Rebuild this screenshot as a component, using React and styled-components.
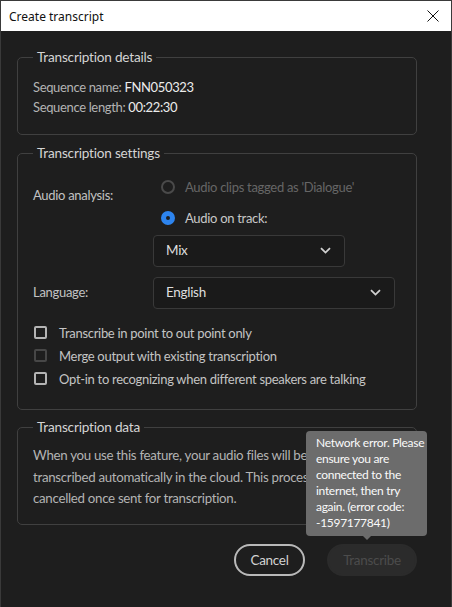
import styled, { createGlobalStyle } from 'styled-components';

const GlobalStyle = createGlobalStyle`
  html, body {
    margin: 0;
    padding: 0;
    background: #1e1e1e;
  }
  body {
    font-family: Lato, "Open Sans", sans-serif;
  }
`;

const Window = styled.div`
  position: relative;
  width: 452px;
  height: 607px;
  box-sizing: border-box;
  border: 1px solid #3a3a3a;
  border-bottom: none;
  background: #1e1e1e;
  overflow: hidden;
`;

const TitleBar = styled.div`
  height: 30px;
  background: #fff;
  display: flex;
  align-items: center;
  justify-content: space-between;
  padding: 0 9px 0 8px;
  font-family: "Noto Sans", "Open Sans", sans-serif;
  font-size: 12px;
  color: #111;
`;

const CloseButton = styled.div`
  width: 14px;
  height: 14px;
  display: flex;
  align-items: center;
  justify-content: center;
  margin-right: 2px;
`;

const Body = styled.div`
  padding: 16px 34px 0 16px;
  display: flex;
  flex-direction: column;
`;

const Group = styled.fieldset`
  margin: 0 0 ${(p) => p.$gap || 0}px 0;
  border: 1px solid #404040;
  border-radius: 5px;
  padding: ${(p) => p.$pad || '10px 15px 17px'};
  min-width: 0;
`;

const Legend = styled.legend`
  margin-left: 0;
  padding: 0 4px;
  font-size: 13.6px;
  line-height: 20px;
  color: #d4d4d4;
  letter-spacing: -0.2px;
`;

const InfoLine = styled.div`
  font-size: 13px;
  line-height: 20px;
  color: #b3b3b3;
  letter-spacing: -0.35px;

  b {
    font-weight: 400;
    color: #ececec;
  }
`;

const SettingsGrid = styled.div`
  display: grid;
  grid-template-columns: 120px 1fr;
  padding-top: 12px;
`;

const Label = styled.div`
  font-size: 13px;
  color: #c2c2c2;
  letter-spacing: -0.3px;
  line-height: 20px;
  padding-top: ${(p) => p.$top || 0}px;
`;

const Controls = styled.div`
  display: flex;
  flex-direction: column;
  align-items: flex-start;
`;

const RadioRow = styled.div`
  height: 24px;
  display: flex;
  align-items: center;
  gap: 10px;
  padding-left: 8px;
  margin-bottom: ${(p) => p.$mb || 0}px;
  font-size: 13px;
  letter-spacing: -0.3px;
  color: ${(p) => (p.$disabled ? '#666' : '#c8c8c8')};
`;

const RadioDot = styled.span`
  width: 14px;
  height: 14px;
  box-sizing: border-box;
  border-radius: 50%;
  border: ${(p) => (p.$on ? '5px solid #2d84ee' : '2px solid #4a4a4a')};
  background: #1e1e1e;
  flex: none;
`;

const Select = styled.div`
  width: ${(p) => p.$w}px;
  height: 32px;
  box-sizing: border-box;
  border: 1px solid #393939;
  border-radius: 4px;
  background: #1a1a1a;
  display: flex;
  align-items: center;
  justify-content: space-between;
  padding: 0 13px 2px 12px;
  margin-top: ${(p) => p.$mt || 0}px;
  font-size: 13.5px;
  color: #dedede;
  letter-spacing: -0.3px;
`;

const Chevron = () => (
  <svg width="11" height="7" viewBox="0 0 11 7">
    <path d="M1 1.2 L5.5 5.6 L10 1.2" fill="none" stroke="#d0d0d0" strokeWidth="1.8" />
  </svg>
);

const CheckList = styled.div`
  display: flex;
  flex-direction: column;
  padding-top: 12px;
`;

const CheckRow = styled.div`
  height: 23px;
  display: flex;
  align-items: center;
  gap: 12px;
  padding-left: 1px;
  font-size: 13px;
  letter-spacing: -0.3px;
  color: #c4c4c4;
`;

const Box = styled.span`
  width: 13px;
  height: 13px;
  box-sizing: border-box;
  border: 2px solid ${(p) => (p.$disabled ? '#474747' : '#b4b4b4')};
  border-radius: 2px;
  flex: none;
`;

const Paragraph = styled.p`
  margin: 0;
  font-size: 13.3px;
  line-height: 21.5px;
  color: #b3b3b3;
  letter-spacing: -0.3px;
  white-space: nowrap;
`;

const Footer = styled.div`
  display: flex;
  justify-content: flex-end;
  gap: 22px;
  margin-top: 19px;
`;

const Button = styled.div`
  height: 32px;
  box-sizing: border-box;
  border-radius: 16px;
  display: flex;
  align-items: center;
  justify-content: center;
  width: ${(p) => p.$w}px;
  font-size: 13.5px;
  letter-spacing: -0.3px;
  border: 2px solid ${(p) => (p.$disabled ? '#2b2b2b' : '#b9b9b9')};
  background: ${(p) => (p.$disabled ? '#2b2b2b' : 'transparent')};
  color: ${(p) => (p.$disabled ? '#4c4c4c' : '#d2d2d2')};
`;

const Tooltip = styled.div`
  position: absolute;
  left: 305px;
  top: 430px;
  width: 121px;
  box-sizing: border-box;
  padding: 4px 4px 5px 10px;
  background: #6c6c6c;
  border-radius: 4px;
  font-size: 12px;
  line-height: 16px;
  letter-spacing: -0.3px;
  color: #fafafa;
  white-space: nowrap;

  &::after {
    content: '';
    position: absolute;
    left: 57px;
    bottom: -4px;
    border-left: 4px solid transparent;
    border-right: 4px solid transparent;
    border-top: 4px solid #6c6c6c;
  }
`;

const tooltipLines = [
  'Network error. Please',
  'ensure you are',
  'connected to the',
  'internet, then try',
  'again. (error code:',
  '-1597177841)',
];

export default function App() {
  return (
    <>
      <GlobalStyle />
      <Window>
        <TitleBar>
          <span>Create transcript</span>
          <CloseButton>
            <svg width="12" height="12" viewBox="0 0 12 12">
              <path d="M0.5 0.5 L11.5 11.5 M11.5 0.5 L0.5 11.5" stroke="#111" strokeWidth="1" />
            </svg>
          </CloseButton>
        </TitleBar>
        <Body>
          <Group $gap={8}>
            <Legend>Transcription details</Legend>
            <InfoLine>
              Sequence name: <b>FNN050323</b>
            </InfoLine>
            <InfoLine>
              Sequence length: <b>00:22:30</b>
            </InfoLine>
          </Group>

          <Group $gap={7} $pad="0 15px 19px">
            <Legend>Transcription settings</Legend>
            <SettingsGrid>
              <Label $top={10}>Audio analysis:</Label>
              <Controls>
                <RadioRow $disabled $mb={7}>
                  <RadioDot />
                  Audio clips tagged as 'Dialogue'
                </RadioRow>
                <RadioRow>
                  <RadioDot $on />
                  Audio on track:
                </RadioRow>
                <Select $w={192} $mt={5}>
                  Mix
                  <Chevron />
                </Select>
              </Controls>
              <Label $top={15}>Language:</Label>
              <Select $w={242} $mt={10}>
                English
                <Chevron />
              </Select>
            </SettingsGrid>
            <CheckList>
              <CheckRow>
                <Box />
                Transcribe in point to out point only
              </CheckRow>
              <CheckRow>
                <Box $disabled />
                Merge output with existing transcription
              </CheckRow>
              <CheckRow>
                <Box />
                Opt-in to recognizing when different speakers are talking
              </CheckRow>
            </CheckList>
          </Group>

          <Group $pad="8px 15px 14px">
            <Legend>Transcription data</Legend>
            <Paragraph>
              When you use this feature, your audio files will be
              <br />
              transcribed automatically in the cloud. This process cannot be
              <br />
              cancelled once sent for transcription.
            </Paragraph>
          </Group>

          <Footer>
            <Button $w={71}>Cancel</Button>
            <Button $w={90} $disabled>
              Transcribe
            </Button>
          </Footer>
        </Body>

        <Tooltip>
          {tooltipLines.map((line) => (
            <div key={line}>{line}</div>
          ))}
        </Tooltip>
      </Window>
    </>
  );
}
